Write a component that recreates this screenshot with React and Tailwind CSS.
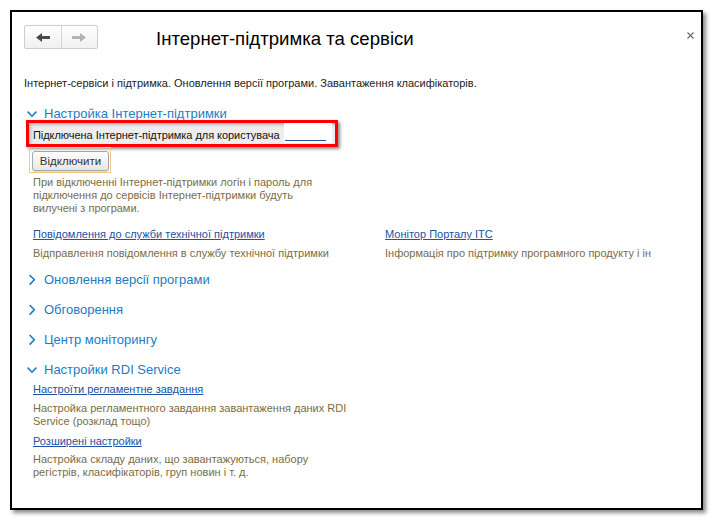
import React from "react";

const Chevron = ({ open }) => (
  <svg width="10" height="13" viewBox="0 0 10 13" className="shrink-0">
    {open ? (
      <path d="M0.6 4.6 L5 9.2 L9.4 4.6" fill="none" stroke="#1a7dc4" strokeWidth="1.6" />
    ) : (
      <path d="M2.6 2 L7.3 6.8 L2.6 11.6" fill="none" stroke="#1a7dc4" strokeWidth="1.6" />
    )}
  </svg>
);

const GroupHeader = ({ open, children, className = "" }) => (
  <div className={"flex items-start ml-[15px] gap-[7px] h-[13px] " + className}>
    <Chevron open={open} />
    <span className="text-[13px] leading-[13px] text-[#1a7dc4] whitespace-nowrap">{children}</span>
  </div>
);

const Arrow = ({ dir, color }) => (
  <svg width="14" height="9" viewBox="0 0 14 9">
    {dir === "left" ? (
      <polygon points="0,4.5 6,0 6,3 14,3 14,6 6,6 6,9" fill={color} />
    ) : (
      <polygon points="14,4.5 8,0 8,3 0,3 0,6 8,6 8,9" fill={color} />
    )}
  </svg>
);

export default function App() {
  return (
    <div className="w-[714px] h-[522px] bg-white p-[10px] font-['Liberation_Sans',Arial,sans-serif]">
      <div className="w-[693px] h-[500px] border-2 border-black bg-white shadow-[3px_3px_4px_rgba(0,0,0,0.45)] flex flex-col">
        {/* header */}
        <div className="flex items-start pt-[13px] pl-[12px]">
          <div className="flex w-[74px] h-[24px] border border-[#cdcdcd] rounded-[2px] bg-gradient-to-b from-white to-[#f0f0f0]">
            <div className="flex-1 flex items-center justify-center border-r border-[#d6d6d6]">
              <Arrow dir="left" color="#4a4a4a" />
            </div>
            <div className="flex-1 flex items-center justify-center">
              <Arrow dir="right" color="#b3b3b3" />
            </div>
          </div>
          <h1 className="ml-[58px] text-[18.6px] leading-[28px] text-black">Інтернет-підтримка та сервіси</h1>
          <svg width="7" height="7" viewBox="0 0 7 7" className="ml-auto mr-[7px] mt-[7px]">
            <path d="M0.5 0.5 L6.5 6.5 M6.5 0.5 L0.5 6.5" stroke="#666" strokeWidth="1.1" />
          </svg>
        </div>

        <p className="mt-[24px] pl-[12px] text-[11px] leading-[13px] text-[#222]">
          Інтернет-сервіси і підтримка. Оновлення версії програми. Завантаження класифікаторів.
        </p>

        <GroupHeader open className="mt-[17px]">Настройка Інтернет-підтримки</GroupHeader>

        <div className="ml-[14px] w-[312px] h-[27px] border-[3px] border-[#ff0000] shadow-[2px_2px_3px_rgba(0,0,0,0.45)] bg-[#ededed] flex items-stretch">
          <div className="flex-1 flex items-start pl-[4px] pt-[6px] shadow-[inset_2px_2px_3px_rgba(0,0,0,0.22)]">
            <span className="text-[11px] leading-[13px] text-[#111] whitespace-nowrap tracking-[-0.05px]">
              Підключена Інтернет-підтримка для користувача
            </span>
            <span className="ml-auto mr-[3px] w-[48px] h-[20px] -mt-[6px] bg-white flex items-start pt-[6px] pl-[1px]">
              <span className="block w-[41px] h-[12px] border-b border-[#2152a6]" />
            </span>
          </div>
        </div>

        <div className="ml-[17px] w-[82px] h-[26px] border border-[#f3c98b]">
          <button className="ml-[2px] w-[77px] h-[20px] rounded-[3px] border border-[#a8a8a8] bg-gradient-to-b from-white to-[#e6e6e6] shadow-[0_1px_1px_rgba(0,0,0,0.15)] text-[11.5px] leading-[18px] text-[#333]">
            Відключити
          </button>
        </div>

        <p className="mt-[3px] pl-[21px] text-[11px] leading-[13px] text-[#7a6d45]">
          При відключенні Інтернет-підтримки логін і пароль для
          <br />
          підключення до сервісів Інтернет-підтримки будуть
          <br />
          вилучені з програми.
        </p>

        <div className="mt-[13px] pl-[21px] flex text-[11px] leading-[13px]">
          <div className="w-[352px] flex flex-col">
            <a className="underline text-[#2152a6] whitespace-nowrap self-start">Повідомлення до служби технічної підтримки</a>
            <span className="mt-[6px] text-[#7a6d45] whitespace-nowrap">Відправлення повідомлення в службу технічної підтримки</span>
          </div>
          <div className="flex flex-col">
            <a className="underline text-[#2152a6] whitespace-nowrap self-start">Монітор Порталу ІТС</a>
            <span className="mt-[6px] text-[#7a6d45] whitespace-nowrap">Інформація про підтримку програмного продукту і ін</span>
          </div>
        </div>

        <GroupHeader className="mt-[13px]">Оновлення версії програми</GroupHeader>
        <GroupHeader className="mt-[17px]">Обговорення</GroupHeader>
        <GroupHeader className="mt-[17px]">Центр моніторингу</GroupHeader>
        <GroupHeader open className="mt-[17px]">Настройки RDI Service</GroupHeader>

        <div className="pl-[21px] flex flex-col text-[11px] leading-[13px]">
          <a className="mt-[7px] underline text-[#2152a6] self-start">Настроїти регламентне завдання</a>
          <p className="mt-[6px] text-[#7a6d45] whitespace-nowrap">
            Настройка регламентного завдання завантаження даних RDI
            <br />
            Service (розклад тощо)
          </p>
          <a className="mt-[7px] underline text-[#2152a6] self-start">Розширені настройки</a>
          <p className="mt-[5px] text-[#7a6d45] whitespace-nowrap">
            Настройка складу даних, що завантажуються, набору
            <br />
            регістрів, класифікаторів, груп новин і т. д.
          </p>
        </div>
      </div>
    </div>
  );
}
